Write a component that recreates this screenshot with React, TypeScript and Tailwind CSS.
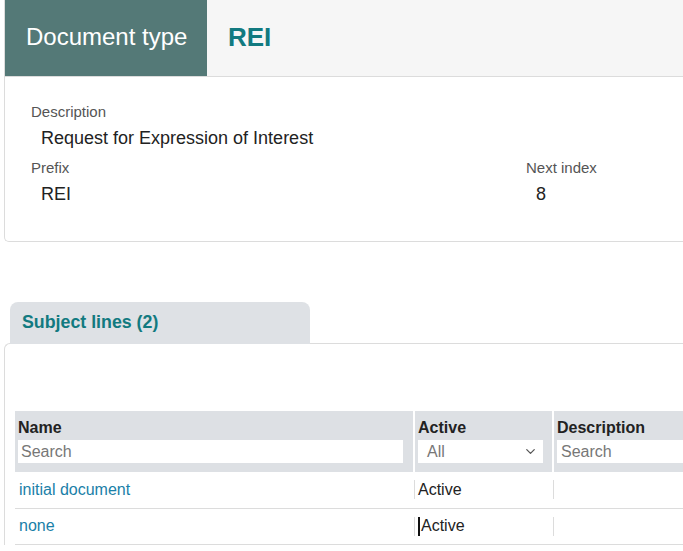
import { ChevronDown } from "lucide-react"

const font = { fontFamily: '"Liberation Sans", Arial, sans-serif' }

type Row = { name: string; active: string; caret?: boolean }

const rows: Row[] = [
  { name: "initial document", active: "Active" },
  { name: "none", active: "Active", caret: true },
]

export default function App() {
  return (
    <div className="h-[551px] w-[683px] overflow-hidden bg-white" style={font}>
      <div className="ml-[4px] w-[720px]">
        {/* document card */}
        <div className="rounded-bl-[5px] border-b border-l border-[#dcdcdc]">
          <div className="flex h-[77px] border-b border-[#dcdcdc] bg-[#f6f6f6]">
            <div className="flex w-[202px] items-center bg-[#547977] pb-[2px] pl-[21px] text-[24px] text-white">
              Document type
            </div>
            <div className="flex items-center pb-[2px] pl-[21px] text-[26px] font-bold text-[#127a80]">REI</div>
          </div>
          <div className="pb-[35px] pl-[26px] pt-[25px]">
            <div className="text-[15px] leading-[20px] text-[#555]">Description</div>
            <div className="mt-[4px] pl-[10px] text-[18px] leading-[24px] text-[#222]">Request for Expression of Interest</div>
            <div className="mt-[8px] flex">
              <div className="w-[495px]">
                <div className="text-[15px] leading-[20px] text-[#555]">Prefix</div>
                <div className="mt-[4px] pl-[10px] text-[18px] leading-[24px] text-[#222]">REI</div>
              </div>
              <div>
                <div className="text-[15px] leading-[20px] text-[#555]">Next index</div>
                <div className="mt-[4px] pl-[10px] text-[18px] leading-[24px] text-[#222]">8</div>
              </div>
            </div>
          </div>
        </div>

        {/* tabs */}
        <div className="mt-[60px] pl-[6px]">
          <div className="relative z-10 flex h-[42px] w-[300px] items-center rounded-t-[8px] bg-[#dee1e5] pb-[1px] pl-[12px] text-[17.8px] font-bold text-[#127a80]">
            Subject lines (2)
          </div>
        </div>
        <div className="-mt-[1px] rounded-tl-[6px] border-l border-t border-[#dcdcdc] pl-[10px] pt-[67px]">
          <table className="w-[720px] border-collapse text-[16px]">
            <thead>
              <tr className="bg-[#dde0e4] align-top">
                <th className="w-[399px] border-r-2 border-white pb-[9px] pl-[3px] pr-[10px] pt-[7px] text-left">
                  <div className="leading-[20px] text-[#222]">Name</div>
                  <div className="mt-[2px] h-[23px] bg-white pl-[3px] text-[16px] font-normal leading-[23px] text-[#777]">Search</div>
                </th>
                <th className="w-[139px] border-r-2 border-white pb-[9px] pl-[3px] pr-[9px] pt-[7px] text-left">
                  <div className="leading-[20px] text-[#222]">Active</div>
                  <div className="mt-[2px] flex h-[23px] items-center justify-between bg-white pl-[9px] pr-[5px] text-[16px] font-normal text-[#777]">
                    <span>All</span>
                    <ChevronDown size={15} strokeWidth={2} className="text-[#555]" />
                  </div>
                </th>
                <th className="pb-[9px] pl-[3px] pt-[7px] text-left">
                  <div className="leading-[20px] text-[#222]">Description</div>
                  <div className="mt-[2px] h-[23px] bg-white pl-[4px] text-[16px] font-normal leading-[23px] text-[#777]">Search</div>
                </th>
              </tr>
            </thead>
            <tbody>
              {rows.map((row) => (
                <tr key={row.name} className="h-[36px] border-b border-[#dcdcdc]">
                  <td className="pl-[4px] text-[#1a80a8]">{row.name}</td>
                  <td>
                    <div className="flex h-[19px] items-center border-l border-[#dcdcdc] pl-[3px] text-[#222]">
                      {row.caret ? <span className="mr-[1px] h-[19px] w-[2px] bg-[#111]" /> : null}
                      {row.active}
                    </div>
                  </td>
                  <td>
                    <div className="h-[19px] border-l border-[#dcdcdc]" />
                  </td>
                </tr>
              ))}
            </tbody>
          </table>
        </div>
      </div>
    </div>
  )
}
